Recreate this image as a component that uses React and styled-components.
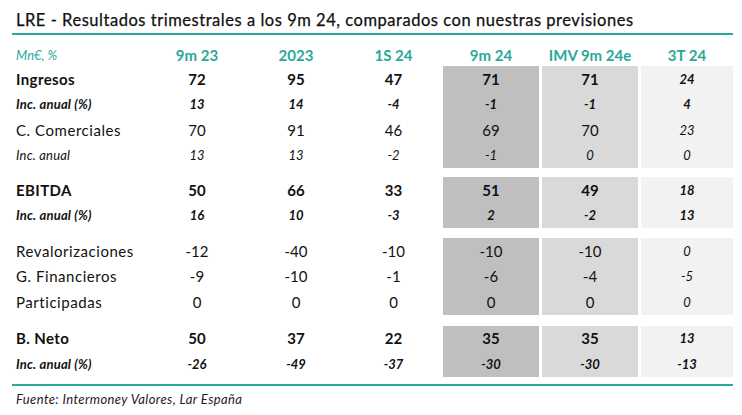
import styled, { createGlobalStyle } from "styled-components";

const Global = createGlobalStyle`
  body {
    margin: 0;
    background: #ffffff;
    font-family: Lato, "Open Sans", sans-serif;
    color: #111;
  }
`;

const TEAL = "#2aa99a";

const header = ["9m 23", "2023", "1S 24", "9m 24", "IMV 9m 24e", "3T 24"];

const blocks = [
  {
    top: 0,
    rows: [
      { kind: "main", label: "Ingresos", v: ["72", "95", "47", "71", "71", "24"] },
      { kind: "pct", label: "Inc. anual (%)", v: ["13", "14", "-4", "-1", "-1", "4"] },
      { kind: "sub", label: "C. Comerciales", v: ["70", "91", "46", "69", "70", "23"] },
      { kind: "subpct", label: "Inc. anual", v: ["13", "13", "-2", "-1", "0", "0"] },
    ],
  },
  {
    top: 9,
    rows: [
      { kind: "main", label: "EBITDA", v: ["50", "66", "33", "51", "49", "18"] },
      { kind: "pct", label: "Inc. anual (%)", v: ["16", "10", "-3", "2", "-2", "13"] },
    ],
  },
  {
    top: 10,
    rows: [
      { kind: "sub", label: "Revalorizaciones", v: ["-12", "-40", "-10", "-10", "-10", "0"] },
      { kind: "sub", label: "G. Financieros", v: ["-9", "-10", "-1", "-6", "-4", "-5"] },
      { kind: "sub", label: "Participadas", v: ["0", "0", "0", "0", "0", "0"] },
    ],
  },
  {
    top: 11,
    rows: [
      { kind: "main", label: "B. Neto", v: ["50", "37", "22", "35", "35", "13"] },
      { kind: "pct", label: "Inc. anual (%)", v: ["-26", "-49", "-37", "-30", "-30", "-13"] },
    ],
  },
];

const shades = [null, null, null, "#bfbfbf", "#d9d9d9", "#f2f2f2"];

const fonts = {
  main: { size: "15px", weight: 700, style: "normal", ls: "0.4px" },
  pct: { size: "13px", weight: 700, style: "italic", ls: "0.2px" },
  sub: { size: "15px", weight: 400, style: "normal", ls: "0.55px" },
  subpct: { size: "13px", weight: 400, style: "italic", ls: "0.2px" },
};

// la columna 3T va siempre en cursiva pequeña
const lastCol = {
  main: "pct",
  pct: "pct",
  sub: "subpct",
  subpct: "subpct",
};

export default function App() {
  return (
    <>
      <Global />
      <Page>
        <Title>LRE - Resultados trimestrales a los 9m 24, comparados con nuestras previsiones</Title>
        <HeadRow>
          <Units>Mn€, %</Units>
          {header.map((h) => (
            <HeadCell key={h}>{h}</HeadCell>
          ))}
        </HeadRow>
        {blocks.map((b, bi) => (
          <Block key={bi} $top={b.top}>
            {b.rows.map((r, ri) => (
              <Row key={ri}>
                <Label $kind={r.kind}>{r.label}</Label>
                {r.v.map((val, ci) => (
                  <Cell
                    key={ci}
                    $kind={ci === 5 ? lastCol[r.kind] : r.kind}
                    $bg={shades[ci]}
                  >
                    {val}
                  </Cell>
                ))}
              </Row>
            ))}
          </Block>
        ))}
        <Source>Fuente: Intermoney Valores, Lar España</Source>
      </Page>
    </>
  );
}

const Page = styled.div`
  width: 742px;
  height: 415px;
  padding: 9px 9px 0 12px;
  box-sizing: border-box;
  background: #fff;
`;

const Title = styled.div`
  padding-left: 4px;
  padding-bottom: 2px;
  border-bottom: 2px solid ${TEAL};
  font-size: 16.5px;
  font-weight: 400;
  letter-spacing: 0.53px;
  -webkit-text-stroke: 0.25px #111;
  color: #111;
  line-height: 22px;
  white-space: nowrap;
`;

const cols = "134px 96px 96px 93px 96px 96px 92px";

const HeadRow = styled.div`
  display: grid;
  grid-template-columns: ${cols};
  column-gap: 3px;
  height: 23px;
  margin-top: 8px;
  align-items: center;
`;

const Units = styled.div`
  padding-left: 4px;
  font-size: 13px;
  font-style: italic;
  color: ${TEAL};
`;

const HeadCell = styled.div`
  text-align: center;
  font-size: 15px;
  font-weight: 700;
  color: ${TEAL};
`;

const Block = styled.div`
  margin-top: ${(p) => p.$top}px;
`;

const Row = styled.div`
  display: grid;
  grid-template-columns: ${cols};
  column-gap: 3px;
  height: 25.5px;
`;

const Label = styled.div`
  display: flex;
  align-items: center;
  padding-left: 4px;
  font-size: ${(p) => fonts[p.$kind].size};
  font-weight: ${(p) => fonts[p.$kind].weight};
  font-style: ${(p) => fonts[p.$kind].style};
  letter-spacing: ${(p) => fonts[p.$kind].ls};
  color: #111;
  white-space: nowrap;
`;

const Cell = styled.div`
  display: flex;
  align-items: center;
  justify-content: center;
  background: ${(p) => p.$bg || "transparent"};
  font-size: ${(p) => fonts[p.$kind].size};
  font-weight: ${(p) => fonts[p.$kind].weight};
  font-style: ${(p) => fonts[p.$kind].style};
  color: #111;
`;

const Source = styled.div`
  margin-top: 7px;
  padding: 5px 0 0 4px;
  border-top: 2px solid ${TEAL};
  font-size: 13px;
  letter-spacing: 0.4px;
  font-style: italic;
  color: #222;
`;
